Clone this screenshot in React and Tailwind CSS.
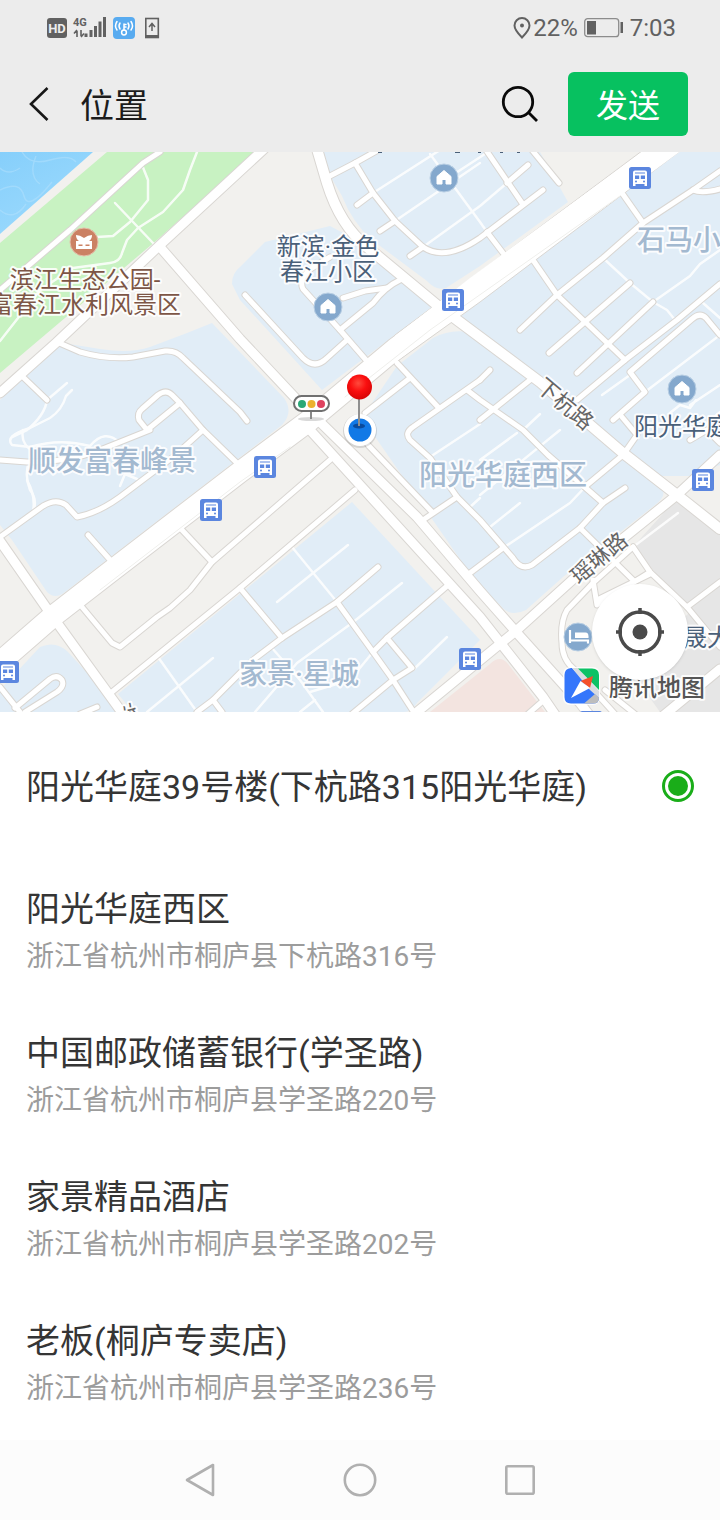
import { useState } from "react";

const places = [
  { id: "p0", name: "阳光华庭39号楼(下杭路315阳光华庭)" },
  { id: "p1", name: "阳光华庭西区", address: "浙江省杭州市桐庐县下杭路316号" },
  { id: "p2", name: "中国邮政储蓄银行(学圣路)", address: "浙江省杭州市桐庐县学圣路220号" },
  { id: "p3", name: "家景精品酒店", address: "浙江省杭州市桐庐县学圣路202号" },
  { id: "p4", name: "老板(桐庐专卖店)", address: "浙江省杭州市桐庐县学圣路236号" },
];

const FONT = "Roboto, 'Noto Sans CJK SC', sans-serif";

const blueZones = [
  "M316 152L540 152L568 202L480 266L446 288Q436 291 427 281L372 240Q352 222 342 196Z",
  "M232 284Q232 273 240 267L265 242L330 226L366 245L436 304L322 390L240 300Z",
  "M680 152L720 152L720 465L690 476L664 476L640 476L480 345L440 308Z",
  "M362 418L397 366L433 338Q452 328 473 333L482 345L600 440L655 482Q672 492 655 505L563 577L526 610Q510 618 500 605L480 588Z",
  "M0 400L57 342L100 349Q130 354 150 347L187 333L212 323L284 398Q294 412 282 425L65 592Q55 600 47 592L12 540L0 525Z",
  "M0 690L40 647Q56 640 68 652L123 712L0 712Z",
  "M118 694L352 502L480 640L417 703Q411 712 404 712L133 712Z",
];

const thinRoads = [
  "M197 152L190 170L183 190L163 212L138 228L127 240L122 253Q120 262 110 263L73 268L40 290L0 341",
  "M142 165L148 180L148 200L130 222L113 236L97 237",
  "M115 203L153 243",
  "M373 193L440 150",
  "M395 221L480 163",
  "M423 247L480 206L507 183",
  "M430 154L480 222L487 232",
  "M445 180L488 152",
  "M603 258L630 283L653 302L667 310L675 320",
  "M653 302L690 276L700 264L720 250",
  "M602 395L630 375",
  "M645 392L720 335",
  "M670 413L680 405L690 408L696 400M690 405L720 385M700 430L720 412",
  "M480 420L492 410M523 430L540 414",
  "M430 457L480 424",
  "M490 527L520 503",
  "M480 460L517 433",
  "M480 495L560 430",
  "M470 507L480 498",
  "M503 548L570 503L587 485",
  "M633 547L678 513",
  "M67 383L47 400Q45 415 27 430L12 437",
  "M72 390L66 396Q62 410 50 418L30 428Q4 436 12 445L30 447Q60 438 90 446Q105 428 120 443",
  "M23 430Q20 444 34 452Q22 470 30 490Q38 500 33 512",
  "M27 480Q36 496 33 512",
  "M120 486L125 474L137 479",
  "M292 547L337 602",
  "M277 602L348 545",
  "M402 583L352 623L297 663L255 712",
  "M447 637L413 670",
  "M272 648L300 680L323 712",
  "M310 692L350 680L373 652",
  "M300 712L315 700",
  "M158 657L197 712",
  "M213 658L147 712",
  "M703 303L720 318",
];

const smallRoads = [
  "M160 152L143 163L70 230L0 290",
  "M328 177L355 163L380 149",
  "M355 163L373 193L395 221L423 247Q445 262 480 238L543 190",
  "M373 193L357 205",
  "M395 221L380 231",
  "M423 247L410 256",
  "M507 183L528 165",
  "M487 232L503 253",
  "M486 150L522 203",
  "M532 150L559 183",
  "M245 295L303 358Q315 370 327 358L347 340",
  "M330 257L312 268Q298 278 303 289L340 330L366 360",
  "M340 330L373 303Q385 287 400 280",
  "M343 298L365 291L387 288",
  "M397 363L438 407",
  "M365 413L410 378",
  "M480 380L413 427Q404 433 410 440L430 458L457 497L480 520L513 558Q521 571 532 565L580 528L603 503L625 488",
  "M467 390L480 400L523 430L548 455L603 503",
  "M480 380L490 370",
  "M530 380L480 420",
  "M580 528L633 580",
  "M420 522L457 497",
  "M368 445L432 512",
  "M470 573L503 548",
  "M587 485L623 455L637 435L622 417",
  "M577 400L625 360L677 320L720 284",
  "M533 260L557 295L625 360",
  "M520 330L557 295L603 258L643 223L693 190L720 171",
  "M622 193L643 223",
  "M693 190Q702 194 720 189",
  "M549 353L630 283",
  "M577 373L653 302",
  "M613 420L645 392L630 372L692 319Q700 312 706 318L720 335",
  "M720 443L707 430L690 440",
  "M57 342L80 352Q108 360 133 357L165 351Q176 350 183 358L240 412L247 421",
  "M23 377L47 400",
  "M147 430L139 420Q137 413 142 409L158 395Q166 389 172 395L180 403L203 430",
  "M147 430L180 403",
  "M0 460L27 462Q70 462 100 450L150 430",
  "M237 463L203 430L173 457L120 497Q98 513 77 517L66 505Q56 498 43 506L0 537",
  "M88 535L112 562",
  "M82 607L112 643L120 647L157 617L170 608L190 590L212 562L330 460",
  "M182 530L212 562",
  "M112 692L240 588L355 490",
  "M240 588L282 638",
  "M197 712L213 700L253 660L282 638L337 602L378 567",
  "M213 700L222 712",
  "M337 602L373 652L393 680L415 714",
  "M373 652L387 638L447 586",
  "M387 638L412 668L393 680L352 714",
  "M15 708L50 679Q57 674 62 680Q65 686 57 692L25 712",
  "M0 687L20 712",
  "M80 714L97 707",
  "M593 583L567 610Q560 622 562 643Q562 660 575 670L615 714",
  "M593 583L633 547",
  "M593 580L597 605L650 572",
  "M597 600L650 574",
  "M633 547L650 572L687 607L720 647",
  "M687 607L720 582",
  "M605 690L635 714",
  "M544 700L528 714",
];

const mediumRoads = [
  "M264 149L160 245L57 342L0 393",
  "M160 247L240 339L316 420M310 430L480 617L543 697L556 716",
  "M318 420L417 517L480 591L517 633L580 703L590 716",
  "M0 541L50 613L123 714",
  "M720 455L677 495L580 573L517 630L417 712",
  "M663 716L720 669",
];

const largeRoads = [
  "M317 149L327 183Q340 225 367 247L437 305L540 382L623 453L677 495L720 529",
];

const avenues = ["M-10 671L52 617L110 572L240 472L310 420L395 349L480 287"];

function Roads({ paths, width, casing }) {
  return paths.map((d) => (
    <path key={d} d={d} strokeWidth={casing ? width + 2 : width} stroke={casing ? "#d9d6d2" : "#ffffff"} />
  ));
}

function BusStop({ x, y }) {
  return (
    <g transform={`translate(${x - 11} ${y - 11})`}>
      <rect width="22" height="22" rx="2.5" fill="#5b86df" />
      <path d="M6 3.500h10Q18 3.500 18 5.500V19h-2.500v-2h-9v2H4V5.500Q4 3.500 6 3.500Z" fill="#fff" />
      <path d="M6 8.500h4.200v3.500H6zM11.800 8.500H16v3.500h-4.200zM6 5.500h10v1H6z" fill="#5b86df" />
      <circle cx="7" cy="14.500" r="1" fill="#5b86df" />
      <circle cx="15" cy="14.500" r="1" fill="#5b86df" />
    </g>
  );
}

function House({ x, y }) {
  return (
    <g transform={`translate(${x} ${y})`}>
      <circle r="14" fill="#84a8cd" stroke="#b9cfe4" />
      <path d="M0-7.500L7-1.500V6H2V1.500h-4V6H-7V-1.500Z" fill="#fff" stroke="#fff" strokeLinejoin="round" />
    </g>
  );
}

function Label({ x, y, size = 24, color = "#4a6079", weight = 400, rotate, children }) {
  return (
    <text
      x={x}
      y={y}
      fontSize={size}
      fontWeight={weight}
      fill={color}
      stroke="#ffffff"
      strokeOpacity="0.9"
      strokeWidth="4"
      strokeLinejoin="round"
      paintOrder="stroke"
      textAnchor="middle"
      transform={rotate ? `rotate(${rotate} ${x} ${y})` : undefined}
    >
      {children}
    </text>
  );
}

function MapView() {
  return (
    <svg
      className="block h-full w-full"
      viewBox="0 152 720 560"
      preserveAspectRatio="xMidYMid slice"
      role="img"
      aria-label="地图"
      fontFamily={FONT}
    >
      <defs>
        <linearGradient id="water" x1="0" y1="0" x2="0.600" y2="1">
          <stop offset="0" stopColor="#86cffb" />
          <stop offset="1" stopColor="#9cdafd" />
        </linearGradient>
        <radialGradient id="pinHead" cx="0.450" cy="0.350" r="0.650">
          <stop offset="0" stopColor="#ff4a3c" />
          <stop offset="0.500" stopColor="#fa0f0f" />
          <stop offset="1" stopColor="#d80404" />
        </radialGradient>
      </defs>
      <rect y="152" width="720" height="560" fill="#f2f1ee" />
      <path d="M0 152H93L0 234Z" fill="url(#water)" />
      <g stroke="#b4e2fd" strokeWidth="1.500" fill="none" opacity="0.500">
        <path d="M0 190Q20 180 24 196T52 182M22 152Q30 166 50 160T76 162M0 210Q14 222 26 204M36 156Q28 176 40 184M0 168Q8 176 20 168" />
      </g>
      <path d="M107 152H256L157 240L0 373V243Z" fill="#c8f2c2" />
      {blueZones.map((d) => (
        <path key={d} d={d} fill="#e1edf7" />
      ))}
      <path d="M677 498L720 533V712H660L630 670L690 612L633 547Z" fill="#e6e6e6" />
      <path d="M430 712L490 664Q500 654 508 664L545 712Z" fill="#f3e4e0" />

      <g fill="none" strokeLinecap="round" strokeLinejoin="round">
        <g stroke="#ffffff" strokeWidth="2.500" opacity="0.850">
          {thinRoads.map((d) => (
            <path key={d} d={d} />
          ))}
        </g>
        <Roads paths={smallRoads} width={5} casing />
        <Roads paths={mediumRoads} width={9} casing />
        <Roads paths={largeRoads} width={10} casing />
        <Roads paths={avenues} width={21} casing />
        <path d="M395 335L662 136L700 136L480 302L395 363Z" fill="#fff" stroke="#d9d6d2" />
        <Roads paths={smallRoads} width={5} />
        <Roads paths={mediumRoads} width={9} />
        <Roads paths={largeRoads} width={10} />
        <Roads paths={avenues} width={21} />
        <path d="M390 340L470 278L645 150L682 150L480 299L398 360Z" fill="#fff" />
        <path d="M100 590L240 482L290 447M345 397L430 330L620 196" stroke="#efefec" strokeWidth="1" />
      </g>

      <path d="M378 152h4v1h-4zM455 152h5v1h-5zM478 152h3v1h-3zM500 152h3v1h-3zM517 152h3v1h-3z" fill="#4a6079" />

      <Label x={679} y={250} size={28} weight={500} color="#a3b9d0">石马小</Label>
      <Label x={112} y={471} size={28} weight={500} color="#a3b9d0">顺发富春峰景</Label>
      <Label x={503} y={485} size={28} weight={500} color="#a3b9d0">阳光华庭西区</Label>
      <Label x={299} y={684} size={28} weight={500} color="#a3b9d0">家景·星城</Label>
      <Label x={85} y={288} color="#7d5646">滨江生态公园-</Label>
      <Label x={85} y={313} color="#7d5646">富春江水利风景区</Label>
      <Label x={328} y={255}>新滨·金色</Label>
      <Label x={328} y={280}>春江小区</Label>
      <Label x={682} y={435}>阳光华庭</Label>
      <Label x={707} y={646}>晟大</Label>
      <Label x={560} y={410} size={22} color="#666666" rotate={40}>下杭路</Label>
      <Label x={604} y={564} size={22} color="#666666" rotate={-40}>瑶琳路</Label>
      <Label x={122} y={721} size={22} color="#666666" rotate={48}>海</Label>

      <g>
        <circle cx="84" cy="242" r="14" fill="#cb8163" stroke="#e5bda9" />
        <path d="M76 235Q80 235 84 238Q88 235 92 235Q92 239 89 241H92V249H76V241H79Q76 239 76 235Z" fill="#fff" />
        <path d="M78.500 244.500h4v1.500h-4zM85.500 244.500h4v1.500h-4z" fill="#cb8163" />
      </g>
      <House x={444} y={178} />
      <House x={328} y={307} />
      <House x={682} y={389} />
      <BusStop x={640} y={178} />
      <BusStop x={453} y={300} />
      <BusStop x={265} y={467} />
      <BusStop x={211} y={510} />
      <BusStop x={703} y={480} />
      <BusStop x={470} y={659} />
      <BusStop x={8} y={672} />
      <BusStop x={591} y={722} />
      <g>
        <circle cx="578" cy="637" r="14" fill="#84a8cd" stroke="#b9cfe4" />
        <path d="M570 630v13M570 640.500h18v3" fill="none" stroke="#fff" strokeWidth="2.200" />
        <path d="M575 632.500h10.500Q588.500 632.500 588.500 636.500V638H575Z" fill="#fff" />
      </g>

      <g>
        <ellipse cx="311" cy="419" rx="13" ry="2" fill="#000" opacity="0.150" />
        <path d="M311 411v8" stroke="#8a8a8a" strokeWidth="2" />
        <rect x="294" y="396" width="35" height="15" rx="7.500" fill="#fff" stroke="#707070" strokeWidth="2" />
        <circle cx="302" cy="404" r="4" fill="#2aa876" />
        <circle cx="311.500" cy="404" r="4" fill="#ecb22f" />
        <circle cx="321" cy="404" r="4" fill="#df4360" />
      </g>

      <circle cx="360" cy="431" r="17" fill="#000" opacity="0.120" />
      <circle cx="360" cy="430" r="16" fill="#fff" />
      <circle cx="360" cy="430" r="11.500" fill="#1279e6" />
      <ellipse cx="359" cy="426" rx="6" ry="2.500" fill="#0a4b9c" />
      <path d="M359 398v28" stroke="#8f8f8f" strokeWidth="2" />
      <circle cx="359.500" cy="387" r="12.500" fill="url(#pinHead)" />

      <g>
        <rect x="563" y="667" width="37" height="38" rx="7" fill="#fff" opacity="0.800" />
        <path d="M571 668H572L599 697V698Q599 703.500 593 703.500H571Q564.500 703.500 564.500 697V675Q564.500 668.500 571 668Z" fill="#3476fb" />
        <path d="M572 668H578L599 691V698L590 690Z" fill="#d9dce0" />
        <path d="M578 668.500H592Q599 668.500 599 675V690Z" fill="#0cc265" />
        <path d="M584 703.500L595 694L599 698Q599 703.500 593 703.500Z" fill="#bdbdbd" />
        <path d="M593 676L590 688L580.500 681Z" fill="#f4502b" />
        <path d="M580.500 681L590 688L571 698Z" fill="#fff" />
      </g>
      <Label x={657} y={696} weight={500} color="#555555">腾讯地图</Label>
    </svg>
  );
}

function StatusBar() {
  return (
    <div className="flex h-14 items-center justify-between px-11 text-[24px] leading-none text-[#616161]">
      <svg width="120" height="28" viewBox="44 15 120 28" aria-label="HD 4G" role="img" fontFamily={FONT}>
        <rect x="47" y="19" width="20" height="20" rx="3" fill="#616161" />
        <text x="57" y="34" fontSize="13" fontWeight="700" fill="#eeeeee" textAnchor="middle">HD</text>
        <text x="73" y="27" fontSize="11" fontWeight="700" fill="#616161">4G</text>
        <path d="M77 38v-6M74 34.500L77 31M81 31v6M84 34.500L81 38" stroke="#616161" strokeWidth="1.600" fill="none" />
        <path d="M84.500 34.500h3V38h-3zM89.500 31h3v7h-3zM94 27h3v11h-3zM98.500 22.500h3V38h-3zM103 18h3v20h-3z" fill="#616161" />
        <rect x="113" y="18" width="22" height="22" rx="4" fill="#58abf0" />
        <g fill="none" stroke="#fff" strokeWidth="1.500" strokeLinecap="round">
          <circle cx="124" cy="33.500" r="2.400" />
          <path d="M124 31v-6M124 25.500h2M124 28h2M120 24q-2 3 0 6M117 22.500q-3 4.500 0 8.500M128 24q2 3 0 6M131 22.500q3 4.500 0 8.500" />
        </g>
        <rect x="145.800" y="19.500" width="12.500" height="19" fill="none" stroke="#616161" strokeWidth="1.600" />
        <path d="M145 36h14v3h-14z" fill="#616161" />
        <path d="M152 32v-7M149 28l3-3.500l3 3.500" fill="none" stroke="#616161" strokeWidth="1.500" />
      </svg>
      <div className="flex items-center">
        <svg width="18" height="22" viewBox="0 0 18 22" fill="none" aria-hidden="true">
          <path d="M9 20.500Q1.500 13 1.500 8.500A7.500 7.500 0 0 1 16.500 8.500Q16.500 13 9 20.500Z" stroke="#616161" strokeWidth="2" />
          <circle cx="9" cy="8.500" r="2" fill="#616161" />
        </svg>
        <span className="ml-0.5">22%</span>
        <svg className="ml-1.5" width="40" height="20" viewBox="0 0 40 20" fill="none" aria-hidden="true">
          <rect x="0.700" y="0.700" width="34" height="18" rx="3" stroke="#8c8c8c" strokeWidth="1.300" />
          <path d="M3 3h9v13.500H3zM36.500 4h2.500v11H36.500z" fill="#616161" />
        </svg>
        <span className="ml-1.5">7:03</span>
      </div>
    </div>
  );
}

function Header() {
  return (
    <header className="flex h-24 items-center pl-4 pr-8">
      <button type="button" aria-label="返回" className="flex h-12 w-12 items-center justify-center">
        <svg width="24" height="36" viewBox="0 0 24 36" fill="none" stroke="#171717" strokeWidth="2.600">
          <path d="M19.500 2L3 18L19.500 34" />
        </svg>
      </button>
      <h1 className="ml-4 flex-1 pt-1 text-[34px] leading-none text-[#1c1c1c]">位置</h1>
      <button type="button" aria-label="搜索" className="mr-6 flex h-12 w-12 items-center justify-center">
        <svg width="40" height="40" viewBox="0 0 40 40" fill="none" stroke="#0a0a0a" strokeWidth="2.800">
          <circle cx="18" cy="18" r="14.700" />
          <path d="M28 28L37 37" />
        </svg>
      </button>
      <button type="button" className="h-16 w-[120px] rounded-md bg-[#07c160] pt-1 text-[32px] leading-none text-white">
        发送
      </button>
    </header>
  );
}

function PlaceRow({ place, checked, onSelect }) {
  return (
    <li>
      <label
        htmlFor={place.id}
        className={`flex cursor-pointer items-center justify-between pl-[26px] pr-[26px] ${place.address ? "h-36" : "h-[148px]"}`}
      >
        <span className="flex flex-col gap-2 pt-0.5">
          <span className="text-[34px] leading-10 text-[#353535]">{place.name}</span>
          {place.address && <span className="text-[28px] leading-10 text-[#9c9c9c]">{place.address}</span>}
        </span>
        <input
          id={place.id}
          type="radio"
          name="place"
          checked={checked}
          onChange={onSelect}
          className="h-8 w-8 shrink-0 appearance-none rounded-full border-[3px] border-transparent bg-clip-content p-[3px] outline-none checked:border-[#1aad19] checked:bg-[#1aad19]"
        />
      </label>
    </li>
  );
}

function NavBar() {
  return (
    <nav className="flex h-20 items-center justify-center gap-28 bg-[#fcfcfc]">
      <button type="button" aria-label="返回上一页" className="flex h-12 w-12 items-center justify-center">
        <svg width="36" height="36" viewBox="0 0 36 36" fill="none" stroke="#b0b0b0" strokeWidth="2.600" strokeLinejoin="round">
          <path d="M31 3V33L5 18Z" />
        </svg>
      </button>
      <button type="button" aria-label="主屏幕" className="flex h-12 w-12 items-center justify-center">
        <svg width="36" height="36" viewBox="0 0 36 36" fill="none" stroke="#b0b0b0" strokeWidth="2.600">
          <circle cx="18" cy="18" r="15.200" />
        </svg>
      </button>
      <button type="button" aria-label="最近任务" className="flex h-12 w-12 items-center justify-center">
        <svg width="36" height="36" viewBox="0 0 36 36" fill="none" stroke="#b0b0b0" strokeWidth="2.600">
          <rect x="4.300" y="4.300" width="27.400" height="27.400" rx="1.500" />
        </svg>
      </button>
    </nav>
  );
}

export default function App() {
  const [selected, setSelected] = useState("p0");
  return (
    <div className="flex min-h-screen flex-col bg-white font-[Roboto,'Noto_Sans_CJK_SC',sans-serif]">
      <div className="bg-[#ececec]">
        <StatusBar />
        <Header />
      </div>
      <section className="relative h-[560px] overflow-hidden" aria-label="地图">
        <MapView />
        <button
          type="button"
          aria-label="定位到我的位置"
          className="absolute bottom-8 right-8 flex h-24 w-24 items-center justify-center rounded-full bg-white shadow-sm"
        >
          <svg width="50" height="50" viewBox="0 0 50 50" fill="none" stroke="#4a4a4a" strokeWidth="3.500">
            <circle cx="25" cy="25" r="20" />
            <circle cx="25" cy="25" r="7.500" fill="#4a4a4a" stroke="none" />
            <path d="M25 1v6M25 43v6M1 25h6M43 25h6" />
          </svg>
        </button>
      </section>
      <main className="flex-1">
        <ul>
          {places.map((place) => (
            <PlaceRow
              key={place.id}
              place={place}
              checked={selected === place.id}
              onSelect={() => setSelected(place.id)}
            />
          ))}
        </ul>
      </main>
      <NavBar />
    </div>
  );
}
